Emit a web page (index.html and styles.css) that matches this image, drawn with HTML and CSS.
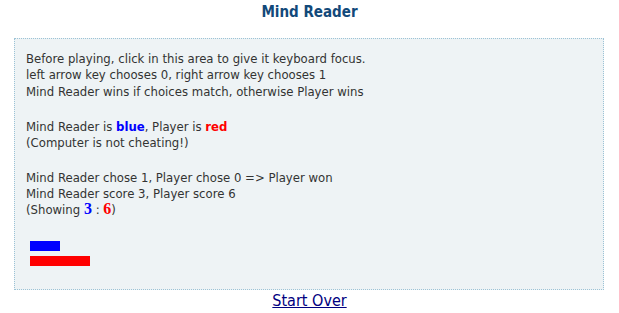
FILE: index.html
```html
<!DOCTYPE html>
<html>
<head>
<meta charset="utf-8">
<title>Mind Reader</title>
<link rel="stylesheet" href="styles.css">
</head>
<body>
<h1 class="title">Mind Reader</h1>
<div class="game">
  <p class="para">Before playing, click in this area to give it keyboard focus.<br>
  left arrow key chooses 0, right arrow key chooses 1<br>
  Mind Reader wins if choices match, otherwise Player wins</p>
  <p class="para">Mind Reader is <b class="blue">blue</b>, Player is <b class="red">red</b><br>
  (Computer is not cheating!)</p>
  <p class="para para-last">Mind Reader chose 1, Player chose 0 =&gt; Player won<br>
  Mind Reader score 3, Player score 6<br>
  (Showing <b class="num blue">3</b> : <b class="num red">6</b>)</p>
  <div class="bars">
    <div class="bar bar-blue" style="width:30px"></div>
    <div class="bar bar-red" style="width:60px"></div>
  </div>
</div>
<div class="footer"><a href="#" class="restart">Start Over</a></div>
</body>
</html>
```
FILE: styles.css
```css
html, body {
  margin: 0;
  padding: 0;
  background: #ffffff;
}
body {
  font-family: "DejaVu Sans Condensed", "DejaVu Sans", sans-serif;
  font-size: 13px;
  color: #333333;
}
.title {
  margin: 0;
  padding-top: 3px;
  height: 38px;
  box-sizing: border-box;
  text-align: center;
  font-size: 15px;
  font-weight: bold;
  color: #12497a;
  line-height: 18px;
}
.game {
  margin: 0 0 0 14px;
  width: 590px;
  box-sizing: border-box;
  border: 1px dotted #9cc3d6;
  background: #eef3f5;
  padding: 12px 11px 23px 11px;
}
.para {
  margin: 0 0 18.7px 0;
  line-height: 16.3px;
}
.para-last {
  margin-bottom: 0;
}
.blue { color: #0000ff; }
.red { color: #ff0000; }
.num {
  font-family: "Liberation Serif", serif;
  font-size: 16px;
  line-height: 10px;
}
.bars {
  display: flex;
  flex-direction: column;
  gap: 5px;
  padding-left: 4px;
  margin-top: 22.2px;
}
.bar {
  height: 10px;
}
.bar-blue { background: #0000ff; }
.bar-red { background: #ff0000; }
.footer {
  text-align: center;
  padding-top: 1px;
  line-height: 19px;
}
.restart {
  color: #000080;
  font-size: 16px;
}
```
